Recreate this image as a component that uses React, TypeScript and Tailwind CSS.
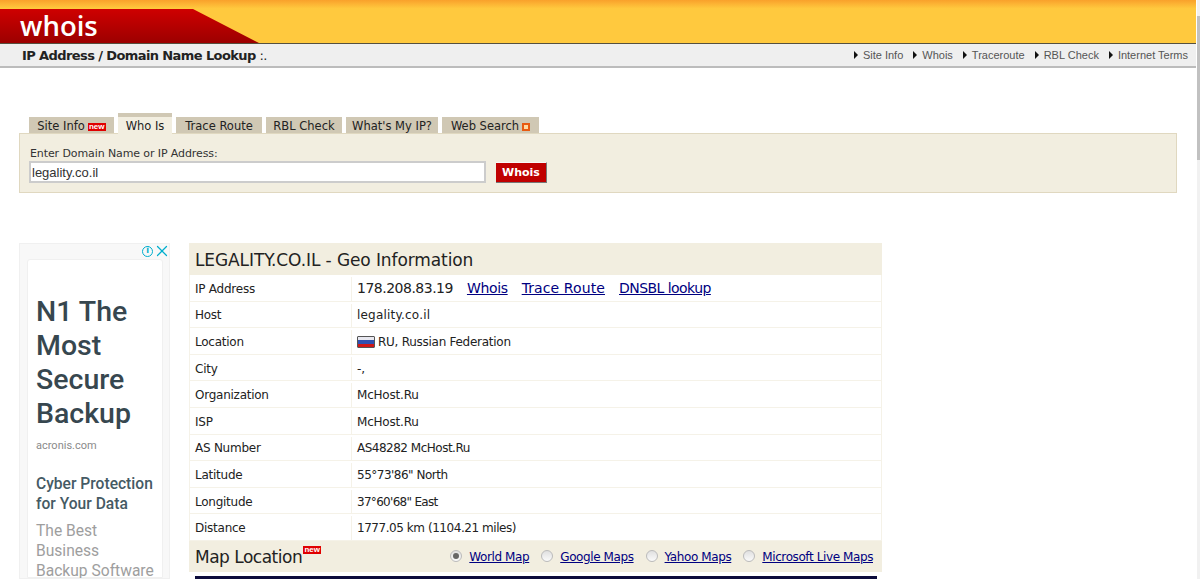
import { X } from "lucide-react";

const NAV_LINKS = ["Site Info", "Whois", "Traceroute", "RBL Check", "Internet Terms"];

const TABS = [
  { label: "Site Info", width: "w-[85px]", badge: "new" },
  { label: "Who Is", width: "w-[54px]", active: true },
  { label: "Trace Route", width: "w-[86px]" },
  { label: "RBL Check", width: "w-[76px]" },
  { label: "What's My IP?", width: "w-[92px]" },
  { label: "Web Search", width: "w-[97px]", badge: "square" },
];

const ROWS = [
  { label: "IP Address", value: "", tracking: "" },
  { label: "Host", value: "legality.co.il", tracking: "tracking-[0.2px]" },
  { label: "Location", value: "RU, Russian Federation", tracking: "tracking-[-0.27px]" },
  { label: "City", value: "-,", tracking: "" },
  { label: "Organization", value: "McHost.Ru", tracking: "tracking-[-0.2px]" },
  { label: "ISP", value: "McHost.Ru", tracking: "tracking-[-0.2px]" },
  { label: "AS Number", value: "AS48282 McHost.Ru", tracking: "tracking-[-0.5px]" },
  { label: "Latitude", value: "55°73'86\" North", tracking: "tracking-[-0.5px]" },
  { label: "Longitude", value: "37°60'68\" East", tracking: "tracking-[-0.7px]" },
  { label: "Distance", value: "1777.05 km (1104.21 miles)", tracking: "tracking-[-0.45px]" },
];

const MAPS = [
  { label: "World Map", checked: true },
  { label: "Google Maps" },
  { label: "Yahoo Maps" },
  { label: "Microsoft Live Maps" },
];

function NewBadge() {
  return (
    <span className="inline-flex h-[8px] w-[18px] items-center justify-center bg-[#e00000] font-['Liberation_Sans',sans-serif] text-[8px] leading-none font-bold text-white">
      new
    </span>
  );
}

function Flag() {
  return (
    <span className="flex h-[12px] w-[18px] flex-col overflow-hidden rounded-[1px] border border-[#555]">
      <span className="flex-1 bg-[#e8e8f0]" />
      <span className="flex-1 bg-[#3050b0]" />
      <span className="flex-1 bg-[#d01818]" />
    </span>
  );
}

function Header() {
  return (
    <header>
      <div className="relative h-[44px] border-b border-[#55503f] bg-gradient-to-b from-[#f9a12b] via-[#ffc93e] via-20% to-[#ffc93e] pt-[1px]">
        <div className="absolute bottom-0 left-0 h-[34px] w-[259px] bg-gradient-to-b from-[#cf0000] to-[#9c0000] [clip-path:polygon(0_0,193px_0,259px_100%,0_100%)]">
          <span className="absolute top-[-2px] left-[20px] font-['Open_Sans',sans-serif] text-[27.5px] leading-[38px] font-semibold text-white">
            whois
          </span>
        </div>
      </div>
      <div className="flex h-[24px] items-center justify-between border-b-2 border-[#bcbcbc] bg-[#efefef] pr-[8px] pl-[22px]">
        <h1 className="mt-[2px] font-['DejaVu_Sans',sans-serif] text-[13px] font-bold tracking-[-0.6px] text-[#222]">
          IP Address / Domain Name Lookup <span className="font-normal">:.</span>
        </h1>
        <nav className="flex gap-[10px] font-['Liberation_Sans',sans-serif] text-[11px] text-[#555]">
          {NAV_LINKS.map((link) => (
            <span key={link} className="flex items-center gap-[5px]">
              <span className="h-0 w-0 border-y-[4px] border-l-[4px] border-y-transparent border-l-[#111]" />
              {link}
            </span>
          ))}
        </nav>
      </div>
    </header>
  );
}

function SearchBox() {
  return (
    <section className="mx-[19px] mt-[45px] w-[1158px] font-['DejaVu_Sans',sans-serif]">
      <div className="flex h-[20px] items-end gap-[4px] pl-[10px]">
        {TABS.map((tab) => (
          <div
            key={tab.label}
            className={
              tab.active
                ? `relative z-10 -mb-px flex h-[21px] items-center justify-center border-t-[4px] border-[#d0c8b4] bg-[#f2eee0] pt-[2px] text-[11.5px] text-[#222] ${tab.width}`
                : `flex h-[16px] items-center justify-center gap-[3px] bg-[#d0c8b4] pt-[3px] text-[11.5px] text-[#222] ${tab.width}`
            }
          >
            {tab.label}
            {tab.badge === "new" && <NewBadge />}
            {tab.badge === "square" && (
              <span className="flex h-[8px] w-[8px] items-center justify-center bg-[#e85a10]">
                <span className="h-[4px] w-[4px] bg-[#ffd8a0]" />
              </span>
            )}
          </div>
        ))}
      </div>
      <div className="h-[60px] border border-[#e0d8c0] bg-[#f2eee0] pt-[13px] pl-[9px]">
        <label className="ml-[1px] block text-[11px] leading-[14px] tracking-[-0.1px] text-[#333]">
          Enter Domain Name or IP Address:
        </label>
        <div className="flex items-center gap-[10px]">
          <input
            readOnly
            value="legality.co.il"
            className="h-[22px] w-[457px] border-2 border-[#ccc] bg-white px-[1px] font-['Liberation_Sans',sans-serif] text-[13px] text-[#333]"
          />
          <button className="mt-[1px] h-[21px] w-[51px] border-t border-r border-b border-t-[#f8f8f8] border-r-[#777] border-b-[#777] bg-[#c00000] pt-[2px] text-[11px] font-bold text-white">
            Whois
          </button>
        </div>
      </div>
    </section>
  );
}

function Ad() {
  return (
    <aside className="h-[336px] w-[151px] shrink-0 overflow-hidden border border-[#f0f0f0] bg-[#f8f8f8] pt-[15px] pl-[7px] font-['Roboto',sans-serif]">
      <div className="relative">
        <div className="absolute -top-[17px] -right-[2px] flex items-center">
          <span className="flex h-[11px] w-[11px] items-center justify-center rounded-full border-[1.5px] border-[#00aecd] font-['DejaVu_Sans',sans-serif] text-[8px] leading-none font-bold text-[#00aecd]">
            i
          </span>
          <X size={18} strokeWidth={1.6} className="text-[#00aecd]" />
        </div>
      </div>
      <div className="h-full w-[136px] rounded-t-[3px] border border-[#f0f0f0] bg-white pt-[35px] pl-[8px]">
        <p className="text-[28.5px] leading-[34px] font-medium text-[#37474f]">
          N1 The
          <br />
          Most
          <br />
          Secure
          <br />
          Backup
        </p>
        <p className="mt-[5px] text-[11px] leading-[20px] text-[#8a8a8a]">acronis.com</p>
        <p className="mt-[18px] text-[15.6px] leading-[20px] font-medium text-[#455a64]">
          Cyber Protection
          <br />
          for Your Data
        </p>
        <p className="mt-[7px] text-[15.6px] leading-[20px] text-[#9e9e9e]">
          The Best
          <br />
          Business
          <br />
          Backup Software
        </p>
      </div>
    </aside>
  );
}

function GeoTable() {
  return (
    <section className="w-[693px] font-['DejaVu_Sans',sans-serif] text-[#222]">
      <h2 className="flex h-[32px] items-center bg-[#f2eee0] pt-[4px] pl-[6px] text-[17px] tracking-[-0.1px]">
        LEGALITY.CO.IL - Geo Information
      </h2>
      <div className="border-x border-[#f5f2e8]">
        {ROWS.map((row) => (
          <div key={row.label} className="flex h-[26.6px] border-b border-[#f5f2e8] pt-[2px] text-[12px]">
            <div className="flex w-[162px] shrink-0 items-center border-r border-[#f5f2e8] pl-[5px] tracking-[-0.25px]">
              {row.label}
            </div>
            <div className={`flex items-center gap-[3px] pl-[5px] ${row.tracking}`}>
              {row.label === "IP Address" && (
                <span className="flex gap-[14px] text-[14px]">
                  <span className="tracking-[-0.5px]">178.208.83.19</span>
                  <a className="tracking-[-0.35px] text-[#000080] underline">Whois</a>
                  <a className="tracking-[0.1px] text-[#000080] underline">Trace Route</a>
                  <a className="tracking-[-0.55px] text-[#000080] underline">DNSBL lookup</a>
                </span>
              )}
              {row.label === "Location" && <Flag />}
              {row.value}
            </div>
          </div>
        ))}
      </div>
      <div className="flex h-[31px] items-center justify-between bg-[#f2eee0] pr-[9px] pl-[6px]">
        <div className="flex items-start pt-[2px]">
          <span className="text-[17px] tracking-[-0.5px]">Map Location</span>
          <span className="mt-[1px] ml-[1px] flex">
            <NewBadge />
          </span>
        </div>
        <div className="mt-[2px] flex gap-[12px] text-[12px] tracking-[-0.4px]">
          {MAPS.map((map) => (
            <label key={map.label} className="flex items-center gap-[7px]">
              <span className="-mt-[3px] flex h-[12px] w-[12px] items-center justify-center rounded-full border border-[#bbb] bg-gradient-to-b from-[#e0e0e0] to-[#fafafa]">
                {map.checked && <span className="h-[6px] w-[6px] rounded-full bg-[#666]" />}
              </span>
              <a className="text-[#000080] underline">{map.label}</a>
            </label>
          ))}
        </div>
      </div>
      <div className="mx-[6px] mt-[4px] h-[10px] w-[682px] bg-[#0c0c3c]" />
    </section>
  );
}

export default function App() {
  return (
    <div className="flex h-[579px] overflow-hidden bg-white">
      <main className="min-w-0 flex-1">
        <Header />
        <SearchBox />
        <div className="mt-[50px] flex gap-[19px] pl-[19px]">
          <Ad />
          <GeoTable />
        </div>
      </main>
      <div className="w-[4px] shrink-0 border-l border-white bg-[#f1f1f1] pt-[16px]">
        <div className="h-[144px] bg-[#c1c1c1]" />
      </div>
    </div>
  );
}
